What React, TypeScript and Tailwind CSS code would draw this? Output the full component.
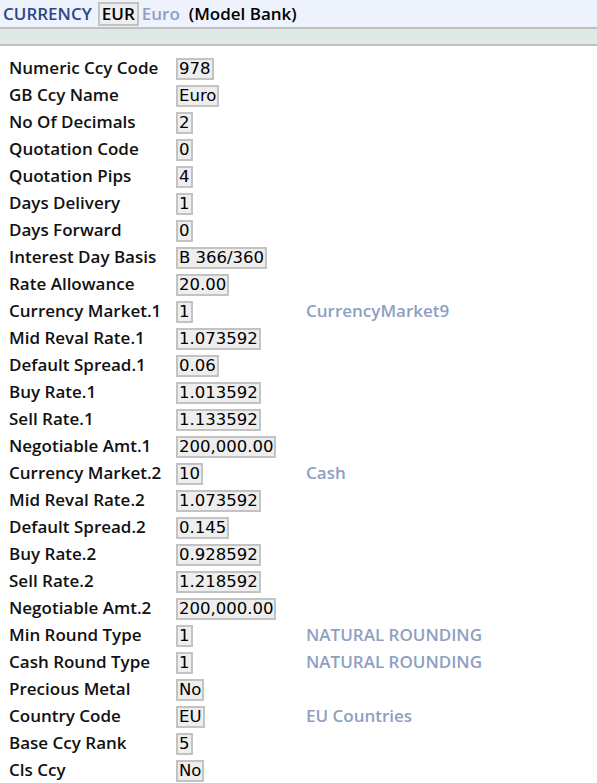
import React from 'react';

type Row = { label: string; value: string; desc?: string };

const rows: Row[] = [
  { label: 'Numeric Ccy Code', value: '978' },
  { label: 'GB Ccy Name', value: 'Euro' },
  { label: 'No Of Decimals', value: '2' },
  { label: 'Quotation Code', value: '0' },
  { label: 'Quotation Pips', value: '4' },
  { label: 'Days Delivery', value: '1' },
  { label: 'Days Forward', value: '0' },
  { label: 'Interest Day Basis', value: 'B 366/360' },
  { label: 'Rate Allowance', value: '20.00' },
  { label: 'Currency Market.1', value: '1', desc: 'CurrencyMarket9' },
  { label: 'Mid Reval Rate.1', value: '1.073592' },
  { label: 'Default Spread.1', value: '0.06' },
  { label: 'Buy Rate.1', value: '1.013592' },
  { label: 'Sell Rate.1', value: '1.133592' },
  { label: 'Negotiable Amt.1', value: '200,000.00' },
  { label: 'Currency Market.2', value: '10', desc: 'Cash' },
  { label: 'Mid Reval Rate.2', value: '1.073592' },
  { label: 'Default Spread.2', value: '0.145' },
  { label: 'Buy Rate.2', value: '0.928592' },
  { label: 'Sell Rate.2', value: '1.218592' },
  { label: 'Negotiable Amt.2', value: '200,000.00' },
  { label: 'Min Round Type', value: '1', desc: 'NATURAL ROUNDING' },
  { label: 'Cash Round Type', value: '1', desc: 'NATURAL ROUNDING' },
  { label: 'Precious Metal', value: 'No' },
  { label: 'Country Code', value: 'EU', desc: 'EU Countries' },
  { label: 'Base Ccy Rank', value: '5' },
  { label: 'Cls Ccy', value: 'No' },
];

const labelFont = "font-['Open_Sans',sans-serif]";
const valueFont = "font-['DejaVu_Sans',sans-serif]";

const ValueBox: React.FC<{ children: React.ReactNode }> = ({ children }) => (
  <span className={`inline-block h-[22px] border-2 border-[#c3c3c3] bg-[#eeeeee] px-[1px] text-[16.5px] leading-[18px] text-black ${valueFont}`}>
    {children}
  </span>
);

export default function App() {
  return (
    <div className={`w-[597px] min-h-[783px] bg-white ${labelFont}`}>
      {/* Title bar */}
      <div className="flex h-[27px] items-center bg-[#eef2fd] pl-[3px] text-[17px] font-semibold">
        <span className="text-[#2d4786]">CURRENCY</span>
        <span className="ml-[6px] inline-block h-[24px] border-2 border-[#c3c3c3] bg-[#eeeeee] px-[2px] leading-[20px] text-black">
          EUR
        </span>
        <span className="ml-[3px] text-[#8e9fc1]">Euro</span>
        <span className="ml-[9px] text-black">(Model Bank)</span>
      </div>
      <div className="h-[2px] bg-[#c0c0c0]" />
      <div className="h-[15px] bg-[#e1e9e5]" />
      <div className="h-[2px] bg-[#c0c0c0]" />

      {/* Fields */}
      <div className="pt-[8px] pl-[9px]">
        {rows.map((row, i) => (
          <div key={i} className="flex h-[27px] items-center">
            <div className="w-[167px] shrink-0 text-[17px] font-semibold text-[#111111]">{row.label}</div>
            <div className="w-[130px] shrink-0">
              <ValueBox>{row.value}</ValueBox>
            </div>
            {row.desc && <div className="text-[17px] font-semibold text-[#8e9fc1]">{row.desc}</div>}
          </div>
        ))}
      </div>
    </div>
  );
}
